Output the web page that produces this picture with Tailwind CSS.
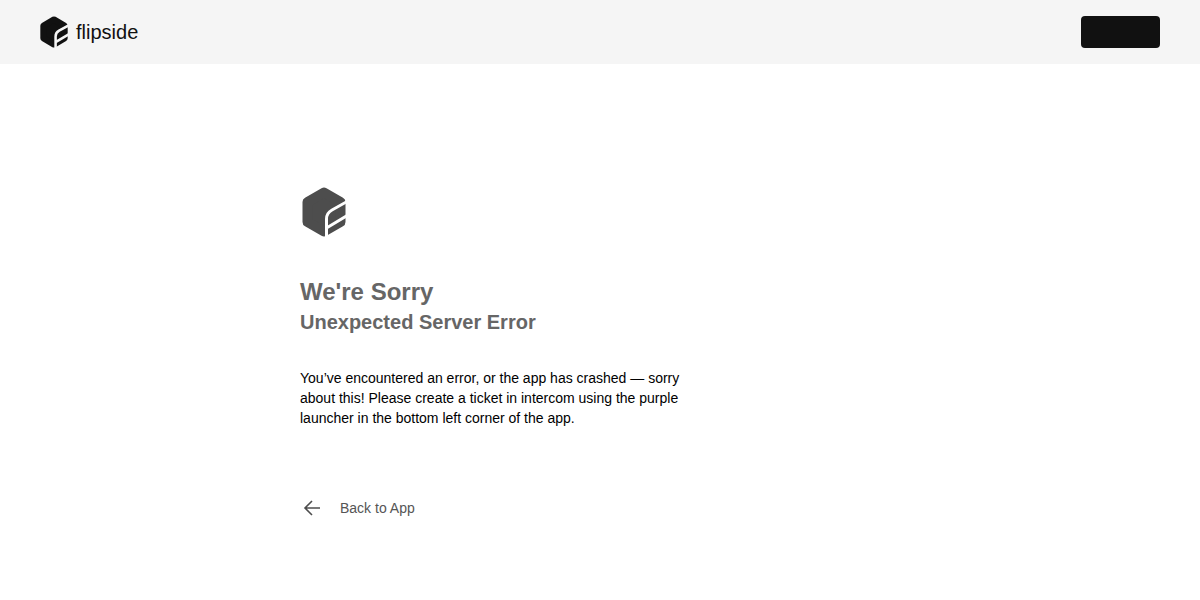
<!DOCTYPE html>
<html lang="en">
<head>
<meta charset="utf-8">
<title>flipside</title>
<script src="https://cdn.jsdelivr.net/npm/@tailwindcss/browser@4"></script>
</head>
<body class="bg-white font-['Liberation_Sans',Arial,sans-serif] h-[600px] overflow-hidden">
<header class="h-16 bg-[#f5f5f5] px-10 flex items-center justify-between">
  <a class="flex items-center gap-2 text-[#111111]">
    <svg class="w-[28px] h-[32px] block" viewBox="2 2 44 50" fill="none">
      <path d="M24 7.5 L7.5 17 V37 L24 46.5 L40.5 37 V17 Z" fill="#111111" stroke="#111111" stroke-width="10" stroke-linejoin="round"/>
      <path d="M26.5 54 V34 Q26.5 28 32 25 L48 16 M26.5 43 L48 30" stroke="#f5f5f5" stroke-width="4"/>
    </svg>
    <span class="text-[20px] leading-7">flipside</span>
  </a>
  <button class="w-[79px] h-8 rounded bg-[#111111]"></button>
</header>
<main class="pl-[300px] pt-[123px]">
  <svg class="w-[44px] h-[50px] block ml-0.5" viewBox="2 2 44 50" fill="none">
    <path d="M24 7.5 L7.5 17 V37 L24 46.5 L40.5 37 V17 Z" fill="#4d4d4d" stroke="#4d4d4d" stroke-width="10" stroke-linejoin="round"/>
    <path d="M26.5 54 V34 Q26.5 28 32 25 L48 16 M26.5 43 L48 30" stroke="#ffffff" stroke-width="3"/>
  </svg>
  <h1 class="mt-[39px] text-2xl font-bold leading-8 text-[#666666]">We're Sorry</h1>
  <h2 class="text-xl font-bold leading-7 text-[#666666]">Unexpected Server Error</h2>
  <p class="mt-[32px] w-[400px] text-sm leading-5 text-black">You’ve encountered an error, or the app has crashed — sorry about this! Please create a ticket in intercom using the purple launcher in the bottom left corner of the app.</p>
  <a class="mt-[68px] flex items-center gap-[16px] text-sm leading-5 text-[#555555]">
    <svg class="w-6 h-6 block" viewBox="0 0 24 24" fill="none" stroke="#4d4d4d" stroke-width="1.6">
      <path d="M20 12 H5 M12 5 L5 12 L12 19"/>
    </svg>
    <span>Back to App</span>
  </a>
</main>
</body>
</html>
